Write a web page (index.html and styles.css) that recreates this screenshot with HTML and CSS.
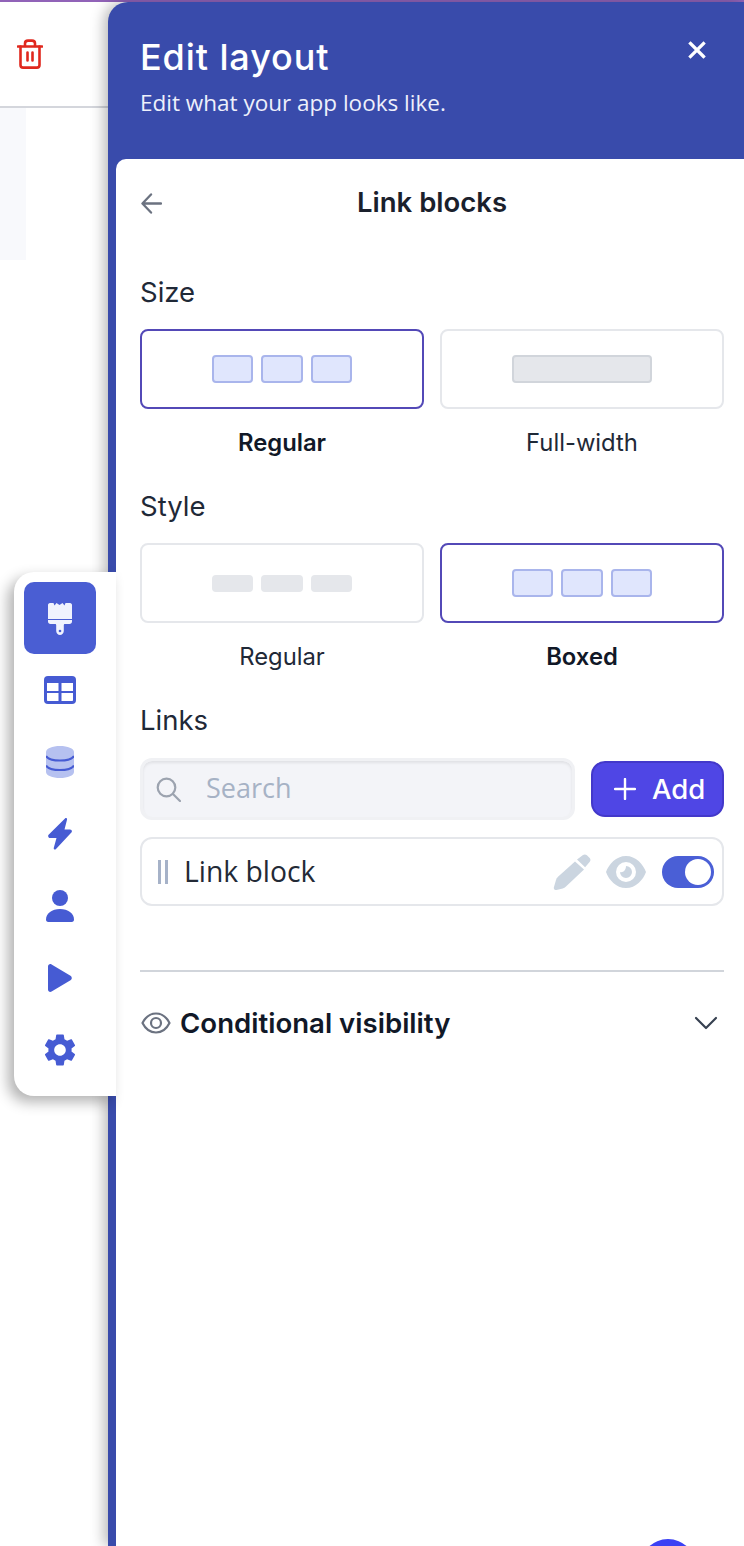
FILE: index.html
```html
<!DOCTYPE html>
<html lang="en">
<head>
<meta charset="utf-8">
<title>Edit layout</title>
<link rel="stylesheet" href="styles.css">
</head>
<body>
<div class="page">
  <div class="topline"></div>
  <div class="main">
    <div class="left">
      <div class="left-bar">
        <svg class="trash" viewBox="0 0 26 30" fill="none" stroke="#e0281e" stroke-width="2.6" stroke-linecap="round" stroke-linejoin="round"><path d="M1 7.5h24"/><path d="M8 7V4.5C8 2.8 9.2 1.6 11 1.6h4c1.800 0 3 1.200 3 2.900V7"/><path d="M3.500 7.500v18.500c0 1.600 1 2.600 2.600 2.600h13.800c1.600 0 2.600-1 2.600-2.600V7.500"/><path d="M10.500 13.500v8M15.500 13.500v8"/></svg>
      </div>
      <div class="left-content"><div class="left-strip"></div></div>
    </div>
    <section class="panel">
      <header class="panel-head">
        <div class="head-text">
          <h1 class="head-title">Edit layout</h1>
          <p class="head-sub">Edit what your app looks like.</p>
        </div>
        <svg class="close" viewBox="0 0 18 18" fill="none" stroke="#fff" stroke-width="3.200" stroke-linecap="square"><path d="M2.500 2.500l13 13M15.500 2.500l-13 13"/></svg>
      </header>
      <div class="panel-body">
        <div class="nav-row">
          <svg class="back" viewBox="0 0 22 22" fill="none" stroke="#6b7280" stroke-width="2.400" stroke-linecap="round" stroke-linejoin="round"><path d="M10.500 1.500L1.500 11l9 9.500M2 11h19"/></svg>
          <h2 class="nav-title">Link blocks</h2>
        </div>

        <h3 class="group-label first">Size</h3>
        <div class="tiles">
          <div class="option">
            <div class="tile selected"><span class="mini"></span><span class="mini"></span><span class="mini"></span></div>
            <div class="tile-name strong">Regular</div>
          </div>
          <div class="option">
            <div class="tile"><span class="mini-wide"></span></div>
            <div class="tile-name">Full-width</div>
          </div>
        </div>

        <h3 class="group-label">Style</h3>
        <div class="tiles">
          <div class="option">
            <div class="tile"><span class="mini-flat"></span><span class="mini-flat"></span><span class="mini-flat"></span></div>
            <div class="tile-name">Regular</div>
          </div>
          <div class="option">
            <div class="tile selected"><span class="mini"></span><span class="mini"></span><span class="mini"></span></div>
            <div class="tile-name strong">Boxed</div>
          </div>
        </div>

        <h3 class="group-label">Links</h3>
        <div class="search-row">
          <div class="search">
            <svg class="search-icon" viewBox="0 0 25 25" fill="none" stroke="#9ca3af" stroke-width="2.200" stroke-linecap="round"><circle cx="10.500" cy="10.500" r="8.800"/><path d="M17 17l7 7"/></svg>
            <span class="search-text">Search</span>
          </div>
          <button class="add-btn">
            <svg class="plus" viewBox="0 0 22 22" fill="none" stroke="#fff" stroke-width="2.400" stroke-linecap="round"><path d="M11 1v20M1 11h20"/></svg>
            <span>Add</span>
          </button>
        </div>
        <div class="link-row">
          <span class="grip"></span>
          <span class="link-name">Link block</span>
          <svg class="pencil" viewBox="0 0 38 36" fill="#cbd5e0"><path d="M24 5.500L30 1c1.300-.9 2.800-.8 3.900.3l2.800 2.800c1.100 1.200 1 2.800-.1 3.900l-4.500 5.200z"/><path d="M22 7.500L31 15.500 13 32.500c-1 .9-2 1.500-3.300 1.900L3.500 36C1.500 36.300.5 35 .9 33.200L3 26c.4-1.300 1-2.300 2-3.300z"/></svg>
          <svg class="eye" viewBox="0 0 40 32" fill="none"><path fill-rule="evenodd" clip-rule="evenodd" fill="#cbd5e0" d="M20 0C30 0 37 8 40 16 37 24 30 32 20 32S3 24 0 16C3 8 10 0 20 0zm0 6a10 10 0 1 0 0 20 10 10 0 0 0 0-20z"/><path fill="#cbd5e0" d="M20 10a6 6 0 1 1-6 6c3 1 6-2 6-6z"/></svg>
          <span class="toggle"><span class="knob"></span></span>
        </div>
        <div class="divider"></div>
        <div class="cond-row">
          <svg class="cond-eye" viewBox="0 0 30 22" fill="none" stroke="#6b7280" stroke-width="2.200"><path d="M1.500 11C4.500 5 9 1.500 15 1.500S25.500 5 28.500 11C25.500 17 21 20.500 15 20.500S4.500 17 1.500 11z" stroke-linejoin="round"/><circle cx="15" cy="11" r="5"/></svg>
          <span class="cond-title">Conditional visibility</span>
          <svg class="chev" viewBox="0 0 24 14" fill="none" stroke="#374151" stroke-width="2.200" stroke-linecap="round" stroke-linejoin="round"><path d="M2 2l10 10L22 2"/></svg>
        </div>
      </div>
    </section>
  </div>

  <nav class="rail">
    <div class="rail-item active">
      <svg class="ic-brush" viewBox="0 0 24 32"><path fill="#f0f3fe" d="M0 2c0-1 .8-2 2-2h3.500l1 2.500L8.500 0l3 2 3-2 2 2.500 1-2.500H22c1.200 0 2 1 2 2v14H0z"/><path fill="#f0f3fe" d="M0 17h24v1.500c0 1.500-1 2.500-2.500 2.500H17c-.8 0-1.200.5-1.200 1.200V28c0 2.300-1.700 4-3.800 4s-3.800-1.700-3.800-4v-5.800c0-.7-.4-1.200-1.200-1.200H2.500C1 21 0 20 0 18.500z"/><circle cx="12" cy="28" r="1.300" fill="#4a5ed3"/></svg>
    </div>
    <div class="rail-item">
      <svg class="ic-table" viewBox="0 0 32 28"><rect width="32" height="28" rx="4" fill="#465bd3"/><rect x="3" y="7" width="11.500" height="8" fill="#fff"/><rect x="17.500" y="7" width="11.500" height="8" fill="#fff"/><path d="M3 17h11.500v8H4c-.6 0-1-.4-1-1zM17.500 17H29v7c0 .6-.4 1-1 1H17.500z" fill="#fff"/></svg>
    </div>
    <div class="rail-item">
      <svg class="ic-db" viewBox="0 0 28 32"><path fill="#b6c1f0" d="M0 6c0-3.500 6.500-6 14-6s14 2.500 14 6v20c0 3.500-6.500 6-14 6S0 29.500 0 26z"/><path fill="none" stroke="#465bd3" stroke-width="2.200" d="M0 10c2 3 8 4.500 14 4.500S26 13 28 10M0 19.500c2 3 8 4.500 14 4.500s12-1.500 14-4.500"/></svg>
    </div>
    <div class="rail-item">
      <svg class="ic-bolt" viewBox="0 0 24 32"><path fill="#465bd3" d="M17 .4c1-.8 2.400 0 2 1.300L16.500 11.500h5.500c1.600 0 2.500 1.700 1.400 3L8 31c-1 1.200-2.700.4-2.200-1.200L8.500 20H2.200C.5 20-.5 18 .6 16.700z"/></svg>
    </div>
    <div class="rail-item">
      <svg class="ic-user" viewBox="0 0 28 32"><circle cx="14" cy="8" r="8" fill="#465bd3"/><path fill="#465bd3" d="M0 29.500C0 23.500 6 19 14 19s14 4.500 14 10.500c0 1.500-.8 2.500-2.300 2.500H2.300C.8 32 0 31 0 29.500z"/></svg>
    </div>
    <div class="rail-item">
      <svg class="ic-play" viewBox="0 0 24 28"><path fill="#465bd3" d="M0 2.500C0 .6 1.900-.6 3.600.4l18.900 11.300c1.700 1 1.700 3.600 0 4.600L3.600 27.600C1.900 28.600 0 27.400 0 25.500z"/></svg>
    </div>
    <div class="rail-item">
      <svg class="ic-gear" viewBox="2.700 2.300 18.600 19.400"><path fill="#465bd3" d="M19.140 12.940c.04-.3.060-.61.060-.94 0-.32-.02-.64-.07-.94l2.030-1.580c.18-.14.23-.41.12-.61l-1.920-3.320c-.12-.22-.37-.29-.59-.22l-2.390.96c-.5-.38-1.030-.7-1.620-.94l-.36-2.540c-.04-.24-.24-.41-.48-.41h-3.840c-.24 0-.43.17-.47.41l-.36 2.540c-.59.24-1.130.57-1.620.94l-2.390-.96c-.22-.08-.47 0-.59.22L2.740 8.870c-.12.21-.08.47.12.61l2.030 1.580c-.05.3-.09.63-.09.94s.02.64.07.94l-2.030 1.580c-.18.14-.23.41-.12.61l1.920 3.320c.12.22.37.29.59.22l2.390-.96c.5.38 1.030.7 1.620.94l.36 2.540c.05.24.24.41.48.41h3.840c.24 0 .44-.17.47-.41l.36-2.540c.59-.24 1.130-.56 1.620-.94l2.390.96c.22.08.47 0 .59-.22l1.920-3.320c.12-.22.070-.47-.12-.61l-2.010-1.580zM12 15.600c-1.980 0-3.600-1.620-3.600-3.600s1.620-3.600 3.600-3.600 3.600 1.620 3.600 3.600-1.620 3.600-3.600 3.600z"/></svg>
    </div>
  </nav>
  <div class="fab"></div>
</div>
</body>
</html>
```

FILE: styles.css
```css
* { box-sizing: border-box; }
html, body { margin: 0; padding: 0; }
body { background: #fff; font-family: "Inter", "Liberation Sans", sans-serif; color: #111827; }
h1, h2, h3, p { margin: 0; font-weight: inherit; }

.page { position: relative; width: 744px; height: 1546px; overflow: hidden; display: flex; flex-direction: column; }
.topline { height: 2px; background: #9163b8; flex: none; }
.main { flex: 1; display: flex; min-height: 0; }

.left { width: 108px; flex: none; display: flex; flex-direction: column; }
.left-bar { height: 106px; border-bottom: 2px solid #d4d6dc; padding: 37px 0 0 17px; background: #fff; }
.trash { display: block; width: 26px; height: 30px; }
.left-content { flex: 1; }
.left-strip { width: 26px; height: 152px; background: #f8f9fc; }

.panel { flex: 1; background: #394bab; border-top-left-radius: 20px; display: flex; flex-direction: column; box-shadow: -4px 0 14px rgba(0, 0, 0, .28); position: relative; }
.panel-head { height: 157px; flex: none; padding: 33px 38px 0 32px; display: flex; justify-content: space-between; align-items: flex-start; color: #fff; }
.head-title { font-family: "Inter", sans-serif; font-size: 36px; line-height: 44px; font-weight: 500; letter-spacing: .9px; }
.head-sub { font-family: "Open Sans", sans-serif; font-size: 22.500px; line-height: 28px; margin-top: 10px; color: #eef0fb; }
.close { width: 18px; height: 18px; margin-top: 6px; }

.panel-body { flex: 1; margin-left: 8px; background: #fff; border-top-left-radius: 10px; padding: 0 20px 0 24px; }
.nav-row { position: relative; height: 88px; display: flex; align-items: center; justify-content: center; }
.nav-title { font-size: 27.500px; font-weight: 600; color: #1a202c; margin-top: -3px; }
.back { position: absolute; left: 1px; top: 34px; width: 21px; height: 21px; }

.group-label { font-size: 27.500px; line-height: 30px; font-weight: 400; color: #1f2937; margin-top: 34px; }
.group-label.first { margin-top: 30px; }
.tiles { display: flex; gap: 16px; margin-top: 22px; }
.option { flex: 1; display: flex; flex-direction: column; align-items: center; }
.tile { width: 100%; height: 80px; border: 2px solid #e5e7eb; border-radius: 8px; display: flex; align-items: center; justify-content: center; gap: 8px; background: #fff; }
.tile.selected { border-color: #5349b7; }
.mini { width: 41.330px; height: 28px; background: #e0e6fd; border: 2px solid #a9b5ec; border-radius: 4px; }
.mini-flat { width: 41.330px; height: 17px; background: #e5e7eb; border-radius: 4px; }
.mini-wide { width: 140px; height: 28px; background: #e5e7eb; border: 2px solid #d1d5db; border-radius: 4px; }
.tile-name { font-size: 23.800px; line-height: 28px; margin-top: 20px; color: #1f2937; }
.tile-name.strong { font-weight: 600; color: #111827; }

.search-row { display: flex; gap: 16px; align-items: center; margin-top: 23px; }
.search { flex: 1; height: 62px; background: #f3f4f8; border: 3px solid #f0f1f4; border-radius: 12px; box-shadow: inset 0 2px 3px rgba(0, 0, 0, .08); display: flex; align-items: center; padding-left: 13px; }
.search-icon { width: 25px; height: 25px; flex: none; }
.search-text { font-family: "Open Sans", sans-serif; font-size: 27px; line-height: 32px; padding-bottom: 3px; color: #a6b2c5; margin-left: 25px; }
.add-btn { width: 133px; height: 56px; flex: none; background: #4f46e5; border: 2px solid #4338ca; border-radius: 14px; color: #fff; display: flex; align-items: center; padding: 0 0 0 21px; gap: 16px; font-family: "Inter", sans-serif; font-size: 27.500px; font-weight: 500; }
.plus { width: 22px; height: 22px; flex: none; }

.link-row { height: 69px; margin-top: 17px; border: 2px solid #e5e7eb; border-radius: 12px; display: flex; align-items: center; padding: 0 8px 0 16px; }
.grip { width: 10px; height: 24px; border-left: 3px solid #a6b2c8; border-right: 3px solid #a6b2c8; flex: none; }
.link-name { font-family: "Open Sans", sans-serif; font-size: 28.300px; line-height: 34px; padding-bottom: 2px; color: #232a36; margin-left: 16px; flex: 1; }
.pencil { width: 38px; height: 36px; flex: none; }
.eye { width: 40px; height: 32px; flex: none; margin-left: 15px; }
.toggle { width: 52px; height: 32px; margin-left: 16px; flex: none; background: #4a5fd6; border-radius: 16px; display: flex; align-items: center; justify-content: flex-end; padding-right: 3px; }
.knob { width: 26px; height: 26px; border-radius: 50%; background: #fff; }

.divider { height: 2px; background: #d1d5db; margin-top: 64px; }
.cond-row { display: flex; align-items: center; margin-top: 34px; }
.cond-eye { width: 30px; height: 22px; flex: none; margin-left: 1px; }
.cond-title { font-size: 27.600px; line-height: 34px; font-weight: 600; color: #111827; margin-left: 9px; flex: 1; }
.chev { width: 24px; height: 14px; flex: none; margin-right: 6px; }

.rail { position: absolute; left: 14px; top: 572px; width: 102px; height: 524px; background: #fff; border-radius: 20px 0 0 20px; padding: 10px 0 0 10px; box-shadow: -6px 6px 14px rgba(0, 0, 0, .3); display: flex; flex-direction: column; z-index: 2; }
.rail-item { width: 72px; height: 72px; flex: none; display: flex; align-items: center; justify-content: center; border-radius: 10px; }
.rail-item.active { background: #4a5ed3; }
.ic-brush { width: 24px; height: 32px; margin-top: 2px; }
.ic-table { width: 32px; height: 28px; }
.ic-db { width: 28px; height: 32px; }
.ic-bolt { width: 24px; height: 32px; }
.ic-user { width: 28px; height: 32px; }
.ic-play { width: 24px; height: 28px; }
.ic-gear { width: 30px; height: 32px; }

.fab { position: absolute; left: 640px; top: 1539px; width: 56px; height: 56px; border-radius: 50%; background: #3b41f4; z-index: 3; }
```
